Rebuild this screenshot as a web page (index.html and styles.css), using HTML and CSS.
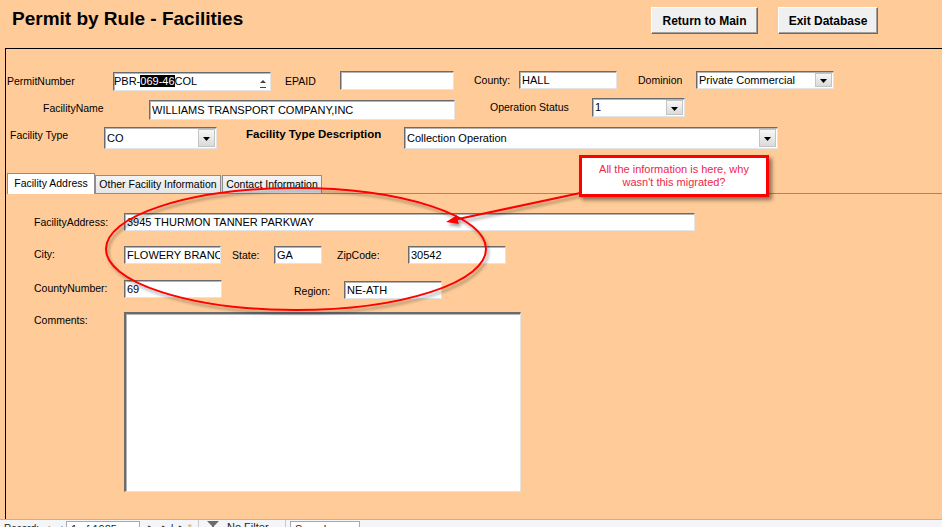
FILE: index.html
```html
<!DOCTYPE html>
<html lang="en">
<head>
<meta charset="utf-8">
<title>Permit by Rule - Facilities</title>
<link rel="stylesheet" href="styles.css">
</head>
<body>
<header class="header">
  <h1 class="title">Permit by Rule - Facilities</h1>
  <div class="actions">
    <button class="btn btn-main">Return to Main</button>
    <button class="btn btn-exit">Exit Database</button>
  </div>
</header>

<main class="form">
  <div class="row row1">
    <label class="lbl lbl-permit">PermitNumber</label>
    <div class="field f-permit">
      <span class="val">PBR-<span class="sel">069-46</span>COL</span>
      <span class="spin"><svg width="14" height="17" viewBox="0 0 14 17"><polygon points="4,10 10,10 7,7" fill="#444"/><rect x="4" y="14" width="6" height="1" fill="#444"/></svg></span>
    </div>
    <label class="lbl lbl-epaid">EPAID</label>
    <div class="field f-epaid"></div>
    <label class="lbl lbl-county">County:</label>
    <div class="field f-county"><span class="val">HALL</span></div>
    <label class="lbl lbl-dominion">Dominion</label>
    <div class="field combo f-dominion"><span class="val">Private Commercial</span><span class="drop"><svg width="7" height="4" viewBox="0 0 7 4"><polygon points="0,0 7,0 3.5,4" fill="#000"/></svg></span></div>
  </div>

  <div class="row row2">
    <label class="lbl lbl-name">FacilityName</label>
    <div class="field f-name"><span class="val">WILLIAMS TRANSPORT COMPANY,INC</span></div>
    <label class="lbl lbl-opstatus">Operation Status</label>
    <div class="field combo f-opstatus"><span class="val">1</span><span class="drop"><svg width="7" height="4" viewBox="0 0 7 4"><polygon points="0,0 7,0 3.5,4" fill="#000"/></svg></span></div>
  </div>

  <div class="row row3">
    <label class="lbl lbl-type">Facility Type</label>
    <div class="field combo f-type"><span class="val">CO</span><span class="drop"><svg width="7" height="4" viewBox="0 0 7 4"><polygon points="0,0 7,0 3.5,4" fill="#000"/></svg></span></div>
    <label class="lbl lbl-desc">Facility Type Description</label>
    <div class="field combo f-desc"><span class="val">Collection Operation</span><span class="drop"><svg width="7" height="4" viewBox="0 0 7 4"><polygon points="0,0 7,0 3.5,4" fill="#000"/></svg></span></div>
  </div>

  <div class="tabs">
    <div class="tab tab-active">Facility Address</div>
    <div class="tab tab-other">Other Facility Information</div>
    <div class="tab tab-contact">Contact Information</div>
    <div class="tab-fill"></div>
  </div>

  <section class="page">
    <div class="row rowa">
      <label class="lbl lbl-addr">FacilityAddress:</label>
      <div class="field f-addr"><span class="val">3945 THURMON TANNER PARKWAY</span></div>
    </div>
    <div class="row rowb">
      <label class="lbl lbl-city">City:</label>
      <div class="field f-city"><span class="val">FLOWERY BRANCH</span></div>
      <label class="lbl lbl-state">State:</label>
      <div class="field f-state"><span class="val">GA</span></div>
      <label class="lbl lbl-zip">ZipCode:</label>
      <div class="field f-zip"><span class="val">30542</span></div>
    </div>
    <div class="row rowc">
      <label class="lbl lbl-cnum">CountyNumber:</label>
      <div class="field f-cnum"><span class="val">69</span></div>
      <label class="lbl lbl-region">Region:</label>
      <div class="field f-region"><span class="val">NE-ATH</span></div>
    </div>
    <div class="row rowd">
      <label class="lbl lbl-comments">Comments:</label>
      <div class="field f-comments"></div>
    </div>
  </section>
</main>

<footer class="statusbar">
  <span class="sb-rec">Record: ◄ ◄</span>
  <span class="sb-box">1 of 1985</span>
  <span class="sb-nav">► ►| ►<span class="star">*</span></span>
  <span class="sb-sep"></span>
  <span class="sb-filter"><svg width="12" height="10" viewBox="0 0 12 10"><polygon points="0,0 12,0 7,5 7,10 5,10 5,5" fill="#6b6b6b"/></svg>No Filter</span>
  <span class="sb-sep"></span>
  <span class="sb-search">Search</span>
</footer>

<svg class="annot" width="942" height="527" viewBox="0 0 942 527">
  <defs>
    <filter id="sh" x="-10%" y="-10%" width="120%" height="130%">
      <feDropShadow dx="2" dy="3" stdDeviation="1.6" flood-color="#000" flood-opacity="0.35"/>
    </filter>
  </defs>
  <g filter="url(#sh)">
    <ellipse cx="296" cy="249" rx="190" ry="61" fill="none" stroke="#ff0000" stroke-width="2"/>
    <line x1="585" y1="192" x2="456" y2="219.5" stroke="#ff0000" stroke-width="2"/>
    <polygon points="446,222 458.7,224 456.9,215.2" fill="#ff0000"/>
  </g>
</svg>

<div class="callout">All the information is here, why<br>wasn't this migrated?</div>
</body>
</html>
```

FILE: styles.css
```css
* { box-sizing: border-box; }
html, body { margin: 0; padding: 0; }
body {
  width: 942px;
  height: 527px;
  overflow: hidden;
  position: relative;
  background: #FFCC99;
  color: #000;
  font-family: "Liberation Sans", Arial, sans-serif;
}

/* header */
.header {
  height: 48px;
  display: flex;
  justify-content: space-between;
  align-items: flex-start;
  padding: 0 64px 0 12px;
}
.title {
  margin: 8px 0 0;
  font-size: 19px;
  line-height: 22px;
  font-weight: bold;
}
.actions { display: flex; gap: 20px; margin-top: 7px; }
.btn {
  height: 27px;
  padding: 0;
  background: #F0F0F0;
  border: 1px solid;
  border-color: #fff #696969 #696969 #fff;
  box-shadow: inset -1px -1px 0 #a0a0a0;
  font: bold 12px "Liberation Sans", Arial, sans-serif;
  color: #000;
}
.btn-main { width: 107px; }
.btn-exit { width: 100px; }

/* form area */
.form {
  margin-left: 5px;
  height: 471px;
  border-top: 1px solid #000;
  border-left: 1px solid #000;
}
.row { display: flex; align-items: flex-start; }
.lbl {
  flex: none;
  font-size: 10.5px;
  line-height: 14px;
  white-space: nowrap;
}
.field {
  flex: none;
  display: flex;
  align-items: center;
  background: #fff;
  border: 1px solid;
  border-color: #6b6b6b #e4e4e4 #e4e4e4 #6b6b6b;
  box-shadow: inset 1px 1px 0 #b4b4b4;
  overflow: hidden;
  white-space: nowrap;
  font-size: 11px;
}
.val { flex: 1; padding-left: 2px; line-height: 13px; overflow: hidden; }
.sel { background: #000; color: #fff; }
.spin { flex: none; width: 14px; align-self: stretch; display: flex; align-items: center; }
.drop {
  flex: none;
  width: 17px;
  align-self: stretch;
  margin: 1px 1px 1px 0;
  display: flex;
  align-items: center;
  justify-content: center;
  padding-top: 2px;
  background: linear-gradient(#f7f7f7, #dadada);
  border: 1px solid #c4c4c4;
}

/* row 1 */
.row1 { margin-top: 22px; height: 20px; }
.lbl-permit { width: 106px; margin: 3px 0 0 1px; }
.f-permit { width: 158px; height: 19px; margin-top: 1px; }
.f-permit .val { padding-left: 0; }
.lbl-epaid { width: 55px; margin: 3px 0 0 14px; }
.f-epaid { width: 114px; height: 19px; }
.lbl-county { width: 45px; margin: 2px 0 0 20px; }
.f-county { width: 98px; height: 18px; }
.lbl-dominion { width: 58px; margin: 2px 0 0 21px; }
.f-dominion { width: 138px; height: 18px; }

/* row 2 */
.row2 { margin-top: 7px; height: 22px; }
.lbl-name { width: 106px; margin: 3px 0 0 37px; }
.f-name { width: 306px; height: 20px; margin-top: 2px; }
.lbl-opstatus { width: 102px; margin: 2px 0 0 35px; }
.f-opstatus { width: 93px; height: 19px; }

/* row 3 */
.row3 { margin-top: 6px; height: 23px; }
.lbl-type { width: 94px; margin: 2px 0 0 4px; }
.f-type { width: 113px; height: 22px; margin-top: 1px; }
.lbl-desc { width: 158px; margin: 1px 0 0 29px; font-weight: bold; font-size: 11.5px; }
.f-desc { width: 374px; height: 22px; margin-top: 1px; }

/* tabs */
.tabs {
  display: flex;
  align-items: flex-end;
  height: 21px;
  margin: 24px 0 0 1px;
}
.tab {
  flex: none;
  font-size: 10.5px;
  text-align: center;
  white-space: nowrap;
  border: 1px solid #8e8e8e;
}
.tab-active {
  width: 88px;
  height: 21px;
  line-height: 19px;
  background: #fff;
  border-bottom: none;
}
.tab-other, .tab-contact {
  height: 19px;
  line-height: 17px;
  background: linear-gradient(#f4f4f4, #e6e6e6);
}
.tab-other { width: 126px; }
.tab-contact { width: 100px; margin-left: 1px; }
.tab-fill { flex: 1; height: 21px; border-bottom: 1px solid #8c8c8c; }

/* tab page */
.page { padding-left: 28px; }
.rowa { margin-top: 19px; height: 18px; }
.lbl-addr { width: 90px; margin-top: 2px; }
.f-addr { width: 571px; height: 18px; }
.rowb { margin-top: 15px; height: 18px; }
.lbl-city { width: 90px; margin-top: 1px; }
.f-city { width: 97px; height: 18px; }
.lbl-state { width: 42px; margin: 2px 0 0 11px; }
.f-state { width: 48px; height: 18px; }
.lbl-zip { width: 71px; margin: 2px 0 0 15px; }
.f-zip { width: 98px; height: 18px; }
.rowc { margin-top: 16px; height: 19px; }
.lbl-cnum { width: 90px; margin-top: 1px; }
.f-cnum { width: 98px; height: 18px; }
.lbl-region { width: 50px; margin: 4px 0 0 72px; }
.f-region { width: 98px; height: 18px; margin-top: 1px; }
.rowd { margin-top: 13px; }
.lbl-comments { width: 90px; margin-top: 1px; }
.f-comments { width: 397px; height: 180px; border-width: 2px 1px 1px 2px; }

/* status bar */
.statusbar {
  height: 8px;
  border-top: 1px solid #b0b5bc;
  background: #F3F5F8;
  display: flex;
  align-items: flex-start;
  overflow: hidden;
  font-family: "Liberation Sans", "DejaVu Sans", sans-serif;
  font-size: 11px;
  line-height: 13px;
  color: #222;
  white-space: nowrap;
}
.sb-rec { width: 66px; padding: 2px 0 0 4px; font-size: 10px; }
.sb-box {
  width: 74px;
  height: 16px;
  margin-top: 1px;
  padding: 1px 0 0 4px;
  background: #fff;
  border: 1px solid #a9a9a9;
}
.sb-nav { width: 58px; padding: 2px 0 0 6px; }
.star { color: #e5b300; }
.sb-sep { width: 1px; height: 8px; background: #c6c9ce; flex: none; }
.sb-filter { width: 86px; padding: 1px 0 0 8px; display: flex; gap: 8px; }
.sb-search {
  width: 70px;
  height: 16px;
  margin: 1px 0 0 4px;
  padding: 1px 0 0 4px;
  background: #fff;
  border: 1px solid #a9a9a9;
}

/* annotations */
.annot {
  position: absolute;
  top: 0;
  left: 0;
  pointer-events: none;
}
.callout {
  position: absolute;
  left: 579px;
  top: 155px;
  width: 190px;
  height: 42px;
  padding-top: 5px;
  background: #fff;
  border: 3px solid #ff0000;
  box-shadow: 3px 3px 4px rgba(0, 0, 0, 0.45);
  color: #ee2748;
  font-size: 11px;
  line-height: 13px;
  text-align: center;
}
```
